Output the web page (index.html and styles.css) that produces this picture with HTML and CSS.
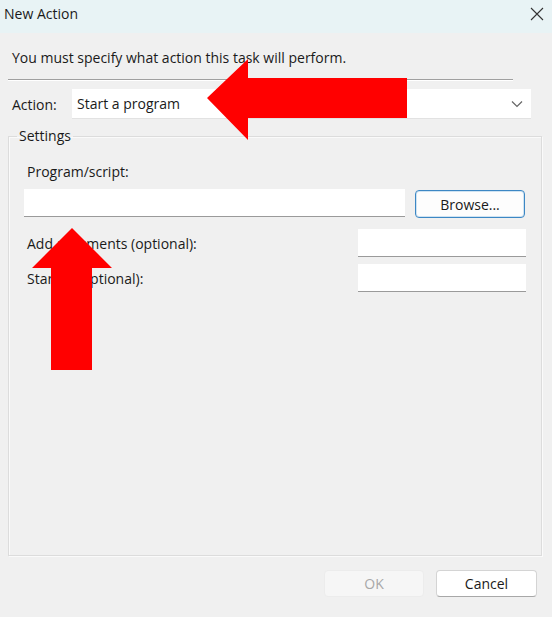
FILE: index.html
```html
<!DOCTYPE html>
<html>
<head>
<meta charset="utf-8">
<link rel="stylesheet" href="styles.css">
</head>
<body>
<div class="dialog">
  <div class="titlebar">
    <span class="title">New Action</span>
    <svg class="close" width="14" height="14" viewBox="0 0 14 14"><path d="M1 1 L13 13 M13 1 L1 13" stroke="#333" stroke-width="1.1" fill="none"/></svg>
  </div>
  <div class="main">
    <div class="intro">You must specify what action this task will perform.</div>
    <div class="separator"></div>
    <div class="action-row">
      <span class="label">Action:</span>
      <div class="combo">
        <span>Start a program</span>
        <svg width="12" height="8" viewBox="0 0 12 8"><path d="M1 1.5 L6 6.5 L11 1.5" stroke="#666" stroke-width="1.2" fill="none"/></svg>
      </div>
    </div>
    <fieldset class="group">
      <legend>Settings</legend>
      <div class="group-body">
        <div class="field-label">Program/script:</div>
        <div class="program-row">
          <div class="input program"></div>
          <button class="btn browse">Browse...</button>
        </div>
        <div class="opt-row first">
          <span class="field-label opt-label">Add arguments (optional):</span>
          <div class="input small"></div>
        </div>
        <div class="opt-row">
          <span class="field-label opt-label">Start in (optional):</span>
          <div class="input small"></div>
        </div>
      </div>
    </fieldset>
    <div class="buttons">
      <button class="btn ok" disabled>OK</button>
      <button class="btn cancel">Cancel</button>
    </div>
  </div>
  <svg class="arrow arrow-left" width="210" height="90" viewBox="0 0 210 90"><polygon points="0,40 41,1 41,20 200,20 200,60 41,60 41,82" fill="#ff0000"/></svg>
  <svg class="arrow arrow-up" width="90" height="150" viewBox="0 0 90 150"><polygon points="40,0 80,40 60,40 60,142 19,142 19,40 0,40" fill="#ff0000"/></svg>
</div>
</body>
</html>
```
FILE: styles.css
```css
html, body {
  margin: 0;
  padding: 0;
}
body {
  font-family: "Open Sans", "Noto Sans", sans-serif;
  font-size: 14px;
  color: #1a1a1a;
  background: #f0f0f0;
}
.dialog {
  position: relative;
  width: 552px;
  height: 617px;
  overflow: hidden;
  background: #f0f0f0;
}
.titlebar {
  height: 33px;
  box-sizing: border-box;
  display: flex;
  align-items: flex-start;
  justify-content: space-between;
  padding: 4px 8px 0 4px;
  background: #e8f3f5;
}
.title {
  font-size: 14px;
  line-height: 20px;
  color: #1a1a1a;
}
.close {
  margin-top: 3px;
}
.main {
  padding: 0 10px 0 8px;
}
.intro {
  padding: 15px 0 0 4px;
  line-height: 20px;
}
.separator {
  margin-top: 11px;
  width: 505px;
  height: 1px;
  background: #a0a0a0;
  border-bottom: 1px solid #ffffff;
}
.action-row {
  margin-top: 8px;
  display: flex;
  align-items: center;
}
.action-row .label {
  width: 64px;
  padding-left: 4px;
  box-sizing: border-box;
}
.combo {
  width: 459px;
  height: 30px;
  box-sizing: border-box;
  background: #ffffff;
  border-bottom: 1px solid #e2e2e2;
  display: flex;
  align-items: center;
  justify-content: space-between;
  padding: 0 8px 0 5px;
}
.group {
  margin: 8px 0 0 0;
  width: 534px;
  height: 429px;
  box-sizing: border-box;
  border: 1px solid #dcdcdc;
  box-shadow: inset 1px 1px 0 #fafafa, 1px 1px 0 #fafafa;
  padding: 0 0 0 8px;
}
.group legend {
  padding: 0 2px;
  line-height: 18px;
}
.group-body {
  padding: 17px 0 0 7px;
}
.field-label {
  padding-left: 3px;
  line-height: 20px;
}
.opt-label {
  padding-top: 3px;
}
.program-row {
  display: flex;
  align-items: flex-start;
  margin-top: 7px;
}
.input {
  background: #ffffff;
  box-sizing: border-box;
  border-bottom: 1px solid #9a9a9a;
}
.program {
  width: 381px;
  height: 28px;
}
.btn {
  font-family: inherit;
  font-size: 14px;
  box-sizing: border-box;
  border-radius: 4px;
  background: #fdfdfd;
  color: #1a1a1a;
  padding: 0;
}
.browse {
  margin: 1px 0 0 10px;
  width: 110px;
  height: 28px;
  border: 1px solid #3c87c4;
  box-shadow: inset 0 0 0 1px #cfe3f2;
}
.opt-row {
  display: flex;
  justify-content: space-between;
  align-items: center;
  width: 502px;
  height: 27px;
  margin-top: 8px;
}
.opt-row.first {
  margin-top: 11px;
}
.small {
  width: 168px;
  height: 28px;
}
.buttons {
  display: flex;
  justify-content: flex-end;
  gap: 12px;
  margin-top: 14px;
  padding-right: 5px;
}
.ok {
  width: 100px;
  height: 27px;
  border: 1px solid #ececec;
  background: #f6f6f6;
  color: #a8a8a8;
}
.cancel {
  width: 101px;
  height: 27px;
  border: 1px solid #d4d4d4;
  border-bottom-color: #a8a8a8;
  background: #ffffff;
}
.arrow {
  position: absolute;
}
.arrow-left {
  left: 207px;
  top: 58px;
}
.arrow-up {
  left: 32px;
  top: 228px;
}
```
